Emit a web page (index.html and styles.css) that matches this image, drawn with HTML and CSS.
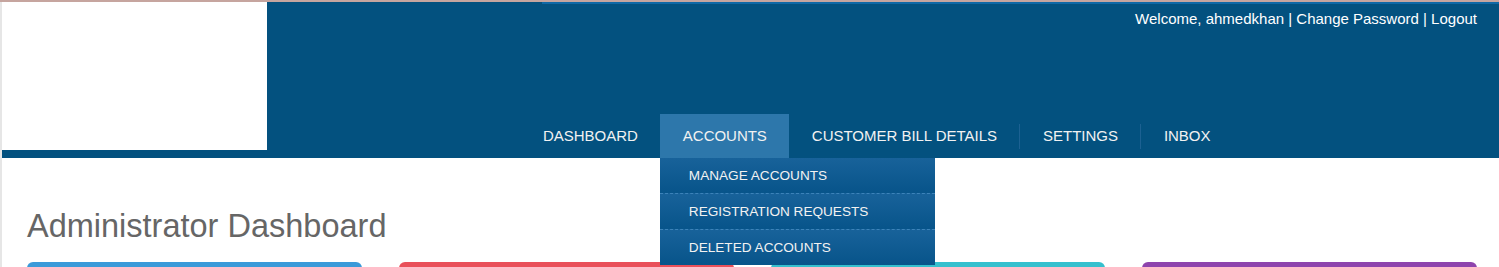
FILE: index.html
```html
<!DOCTYPE html>
<html>
<head>
<meta charset="utf-8">
<link rel="stylesheet" href="styles.css">
</head>
<body>
<div class="page">
  <div class="frame">
    <header class="header">
      <div class="logo"></div>
      <div class="header-main">
        <div class="topline"></div>
        <div class="userbar">Welcome, ahmedkhan | <a href="#">Change Password</a> | <a href="#">Logout</a></div>
        <nav class="nav">
          <a class="nav-item" href="#">DASHBOARD</a>
          <div class="nav-item active">ACCOUNTS
            <ul class="dropdown">
              <li>MANAGE ACCOUNTS</li>
              <li>REGISTRATION REQUESTS</li>
              <li>DELETED ACCOUNTS</li>
            </ul>
          </div>
          <a class="nav-item" href="#">CUSTOMER BILL DETAILS</a>
          <span class="sep"></span>
          <a class="nav-item" href="#">SETTINGS</a>
          <span class="sep"></span>
          <a class="nav-item" href="#">INBOX</a>
        </nav>
      </div>
    </header>
    <main class="content">
      <h1 class="title">Administrator Dashboard</h1>
      <div class="cards">
        <div class="card blue"></div>
        <div class="card red"></div>
        <div class="card teal"></div>
        <div class="card purple"></div>
      </div>
    </main>
  </div>
</div>
</body>
</html>
```
FILE: styles.css
```css
* { box-sizing: border-box; }
html, body { margin: 0; padding: 0; background: #fff; }
body { font-family: "Liberation Sans", Arial, sans-serif; overflow: hidden; }
.page { border-top: 2px solid #c6a59f; }
.frame { border-left: 2px solid #e6e6e6; min-height: 265px; }
.header { display: flex; background: #03517f; height: 156px; }
.logo { width: 265px; height: 148px; background: #fff; flex: none; }
.header-main { flex: 1; display: flex; flex-direction: column; }
.topline { height: 2px; margin-left: 275px; background: #0f68a6; }
.userbar { text-align: right; color: #fff; font-size: 15px; padding: 6px 22px 0 0; line-height: 17px; }
.userbar a { color: #fff; text-decoration: none; }
.nav { margin-top: auto; height: 44px; display: flex; align-items: center; padding-left: 253px; }
.nav-item { position: relative; height: 44px; display: flex; align-items: center; padding: 0 22px 1px 23px; color: #f2f2f2; font-size: 15px; letter-spacing: -0.02px; text-decoration: none; }
.nav-item.active { background: #2d77ab; }
.sep { width: 1px; height: 25px; background: #1c6192; }
.dropdown { position: absolute; top: 44px; left: 0; width: 275px; margin: 0; padding: 0; list-style: none; z-index: 5; letter-spacing: 0; }
.dropdown li { height: 36px; padding-left: 29px; display: flex; align-items: center; font-size: 13.6px; color: #f2f2f2; background: linear-gradient(#18629a, #07548a); border-bottom: 1px dashed #3c83b9; }
.dropdown li:last-child { height: 35px; border-bottom: none; }
.content { padding: 0 22px 0 25px; }
.title { margin: 49px 0 0; font-weight: normal; font-size: 32.5px; line-height: 38px; color: #666; }
.cards { margin-top: 17px; display: grid; grid-template-columns: repeat(4, 1fr); gap: 37px; }
.card { height: 120px; border-radius: 6px 6px 0 0; }
.blue { background: #3a9ad9; }
.red { background: #e9505a; }
.teal { background: #35c0ce; }
.purple { background: #8e44ad; }
```
